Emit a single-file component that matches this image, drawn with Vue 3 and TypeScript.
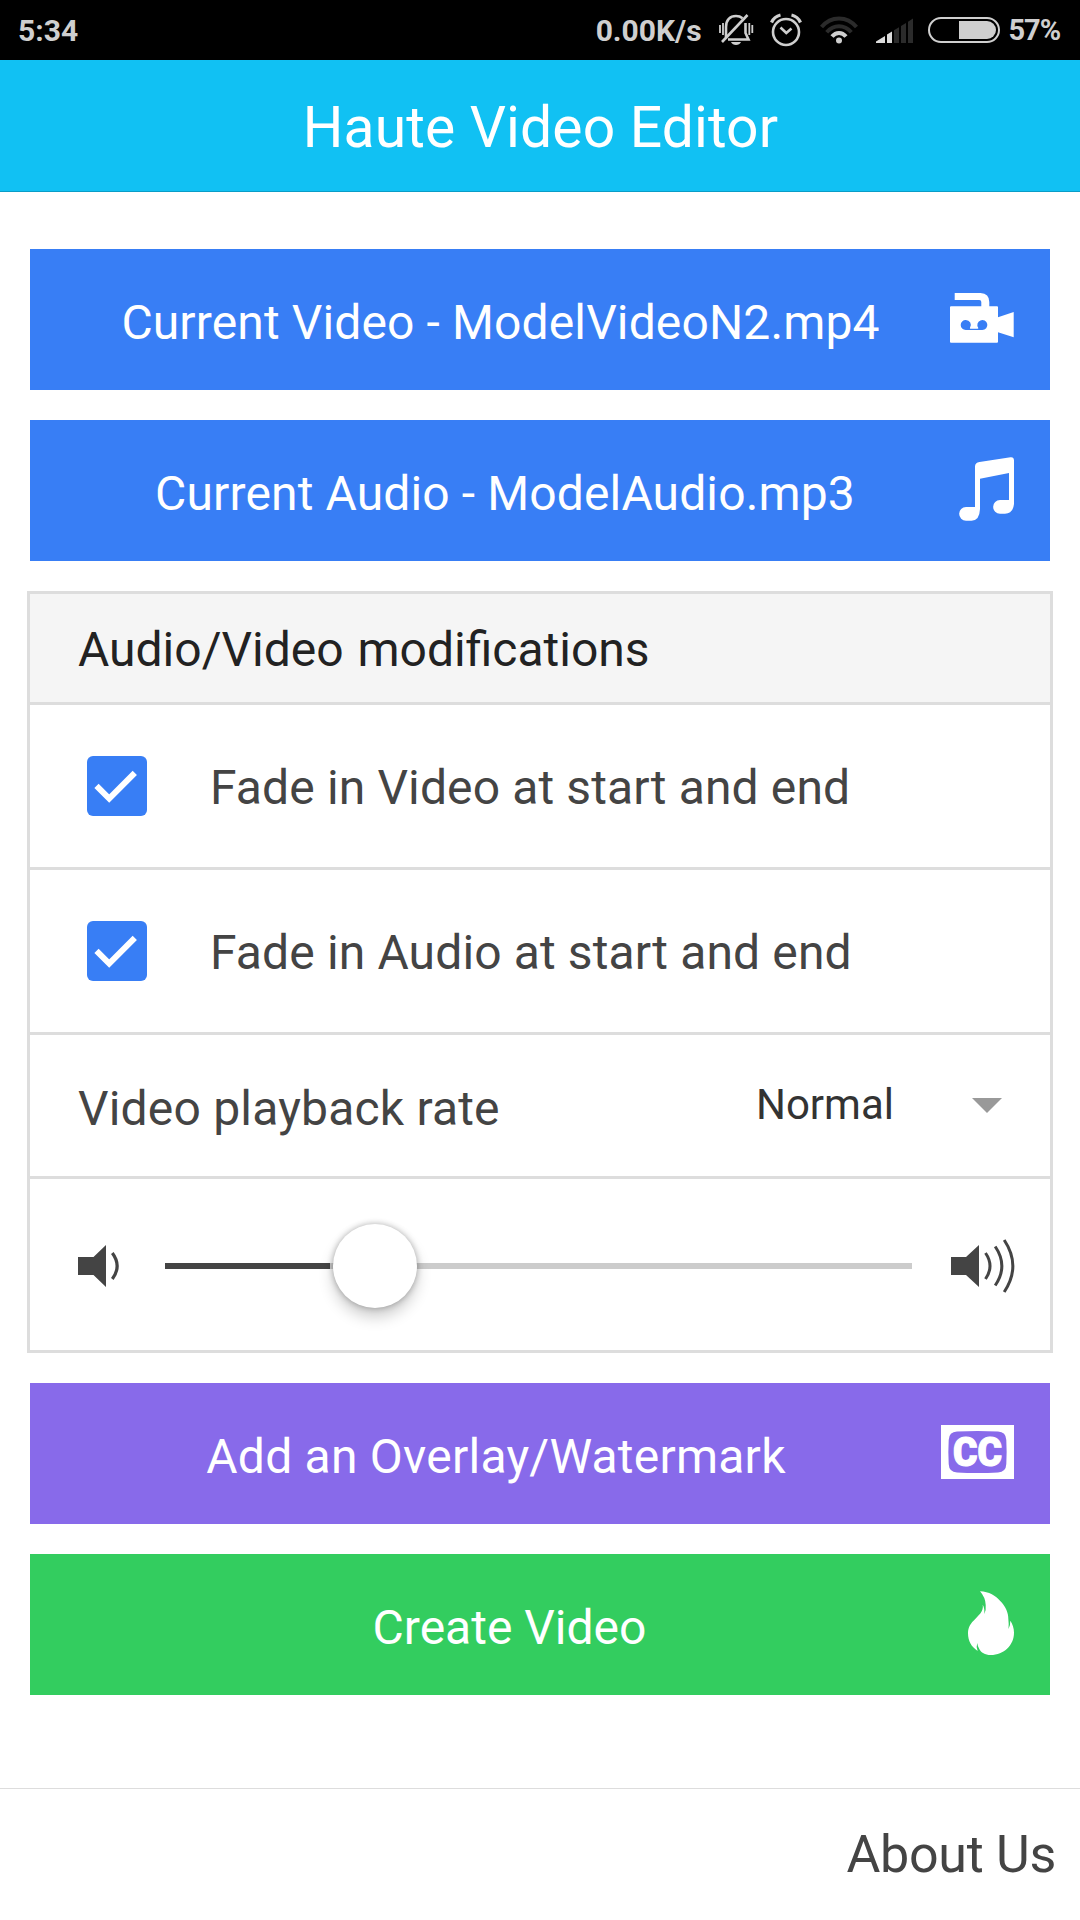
<script setup lang="ts">
import { ref } from 'vue'

interface Toggle {
  id: string
  label: string
  checked: boolean
}

const toggles = ref<Toggle[]>([
  { id: 'fade-video', label: 'Fade in Video at start and end', checked: true },
  { id: 'fade-audio', label: 'Fade in Audio at start and end', checked: true },
])
const videoFile = ref('ModelVideoN2.mp4')
const audioFile = ref('ModelAudio.mp3')
const rate = ref('Normal')
</script>

<template>
  <div class="screen">
    <div class="status">
      <span class="clock">5:34</span>
      <span class="speed">0.00K/s</span>
      <svg class="bell" width="36" height="34" viewBox="0 0 36 34" fill="none" stroke="#cfcfcf" stroke-width="2.6">
        <path d="M8 24V14C8 7 12 3 18 3c2.600 0 4.800.800 6.500 2.200M27.500 10v10l3 6.500H10" />
        <path d="M29.500 2 4 29" />
        <path d="M2 12v8M5 10v12M31.300 10v12M34.300 12v8" stroke-width="1.800" />
        <path d="M13 29h10c-1.500 4-8.500 4-10 0z" fill="#cfcfcf" stroke="none" />
      </svg>
      <svg class="alarm" width="32" height="34" viewBox="0 0 32 34" fill="none" stroke="#cfcfcf" stroke-width="2.600">
        <circle cx="16" cy="19" r="13" />
        <path d="M10.500 14.500l5.800 5.500 5.200-4.500" />
        <path d="M1.500 9.500C3 6 6 3 10.500 2M30.500 9.500C29 6 26 3 21.500 2" stroke-width="3.200" />
      </svg>
      <svg class="wifi" width="38" height="28" viewBox="0 0 38 28" fill="none" stroke="#2b2b2b" stroke-width="4">
        <path d="M1.500 11C11-.500 27-.500 36.500 11" />
        <path d="M6.700 16.200c7-8 17.600-8 24.600 0" />
        <path d="M12 20.500c4-4.800 10-4.800 14 0" stroke="#cfcfcf" />
        <circle cx="19" cy="24.500" r="3" fill="#cfcfcf" stroke="none" />
      </svg>
      <svg class="signal" width="37" height="25" viewBox="0 0 37 25">
        <path d="M0 25v-1.500L9 18v7zM11 25v-8.500l5-3V25z" fill="#dcdcdc" />
        <path d="M18 25V12.200l5-3V25zM25 25V8l5-3v20zM32 25V3.800L37 .500V25z" fill="#2b2b2b" />
      </svg>
      <svg class="battery" width="72" height="26" viewBox="0 0 72 26">
        <rect x="1" y="1" width="70" height="24" rx="12" fill="none" stroke="#cfcfcf" stroke-width="2" />
        <path d="M31 4h28a9 9 0 0 1 0 18H31z" fill="#cfcfcf" />
      </svg>
      <span class="percent">57%</span>
    </div>

    <header class="bar"><h1>Haute Video Editor</h1></header>

    <main class="content">
      <button class="btn positive">
        <span>Current Video - {{ videoFile }}</span>
        <svg class="i-video" width="64" height="50" viewBox="0 0 64 50" fill="#fff">
          <path d="M4.700 0H30.500Q39.300.500 39.300 9v5h-8V9q0-2-2-2H4.700z" />
          <path fill-rule="evenodd" d="M1 13.300H47q1 0 1 1V24.300L63.700 19V44.300L48 39.300v9.400q0 1-1 1H1q-1 0-1-1V14.300q0-1 1-1zM15.700 27a5 5 0 0 0 0 10h16.600a5 5 0 1 0-4.100-2.200q.500 1-.700 1h-7q-1 0-.500-1A5 5 0 0 0 15.700 27z" />
        </svg>
      </button>
      <button class="btn positive">
        <span>Current Audio - {{ audioFile }}</span>
        <svg class="i-music" width="55" height="64" viewBox="0 0 55 64" fill="#fff">
          <path d="M16 9.500Q16 5.800 20.500 5L51.500.200Q55-.200 55 3.500V47Q54 56.700 46 56.700H41A6.850 6.850 0 0 1 41 43H50V16L21 21.700V52Q20.500 63.700 12.500 63.700H7A6.850 6.850 0 0 1 7 50H16z" />
        </svg>
      </button>

      <section class="card">
        <div class="row divider">Audio/Video modifications</div>
        <label v-for="t in toggles" :key="t.id" class="row toggle">
          <span class="box">
            <svg v-if="t.checked" width="60" height="60" viewBox="0 0 60 60">
              <path d="M9.500 29.800 22.200 42.500 47.800 16.800" fill="none" stroke="#fff" stroke-width="6" />
            </svg>
          </span>
          <span class="caption">{{ t.label }}</span>
        </label>
        <div class="row select">
          <span class="caption">Video playback rate</span>
          <span class="value">{{ rate }}</span>
          <i class="arrow"></i>
        </div>
        <div class="row range">
          <svg width="42" height="54" viewBox="0 0 42 54">
            <path d="M0 18H15.500L28 6V48L15.500 36H0z" fill="#444" />
            <path d="M34.300 14Q44 27 34.300 40" fill="none" stroke="#444" stroke-width="3.200" />
          </svg>
          <div class="track"><div class="fill"></div><div class="thumb"></div></div>
          <svg width="64" height="54" viewBox="0 0 64 54">
            <path d="M0 18H15L28 6V48L15 36H0z" fill="#444" />
            <path d="M34.500 14Q43.500 27 34.500 40M44.200 7.500Q57.500 27 44.200 46.500M53.200 1Q70.500 27 53.200 53" fill="none" stroke="#444" stroke-width="3" />
          </svg>
        </div>
      </section>

      <button class="btn royal">
        <span>Add an Overlay/Watermark</span>
        <svg class="i-cc" width="73" height="54" viewBox="0 0 73 54">
          <path fill="#fff" d="M0 0h73v54H0z" />
          <path fill="#886aea" d="M16 6.600Q36.500 5.500 57 6.600 65 7 65.300 15 66 27 65.300 39 65 47 57 47.400 36.500 48.500 16 47.400 8 47 7.700 39 7 27 7.700 15 8 7 16 6.600z" />
          <text x="12" y="41" textLength="49" lengthAdjust="spacingAndGlyphs">CC</text>
        </svg>
      </button>
      <button class="btn balanced">
        <span>Create Video</span>
        <svg class="i-flame" width="46" height="64" viewBox="0 0 46 64" fill="#fff">
          <path d="M12 .300C21 .500 28 5 32 9.700 37.500 15 40.500 22 40.300 27.500Q41 33 40.500 38 42.500 34 42.300 29.700C44.500 33 46 37 46 41.700 46 54 36 64 22.700 64 17 64 13 61.500 11.300 58Q9.500 55 9.300 52 7.800 56 9.700 60C3.500 56 0 50 0 42.300 0 36 3 32 7 28.300L12.500 22.300Q15.500 18 14.700 13.700 16.800 17 16.300 23 18.300 19 17.700 14 17.500 6.500 12 .300z" />
        </svg>
      </button>
    </main>

    <footer class="footer">About Us</footer>
  </div>
</template>

<style>
body {
  margin: 0;
  background: #fff;
}
</style>

<style scoped>
.screen {
  width: 1080px;
  height: 1920px;
  display: flex;
  flex-direction: column;
  overflow: hidden;
  background: #fff;
  color: #444;
  font-family: Roboto, "Liberation Sans", sans-serif;
  font-size: 48px;
}
.screen * {
  box-sizing: border-box;
}
svg {
  display: block;
  flex: none;
}
.status {
  height: 60px;
  flex: none;
  display: flex;
  align-items: center;
  padding: 0 20px 0 18px;
  background: #000;
  color: #cfcfcf;
  font-size: 30px;
  font-weight: 700;
  line-height: 58px;
}
.clock,
.speed {
  padding-top: 2px;
}
.speed {
  margin-left: auto;
}
.bell {
  margin-left: 16px;
}
.alarm {
  margin-left: 16px;
}
.wifi {
  margin-left: 18px;
}
.signal {
  margin-left: 18px;
}
.battery {
  margin-left: 15px;
}
.percent {
  margin-left: 9px;
  font-size: 29px;
  letter-spacing: -1.1px;
}
.bar {
  height: 132px;
  flex: none;
  background: #11c1f3;
  border-bottom: 1px solid #0a9dc7;
}
h1 {
  margin: 0;
  padding: 4px 0 0 1px;
  text-align: center;
  color: #fff;
  font-size: 57px;
  font-weight: 400;
  letter-spacing: 0.13px;
  line-height: 127px;
}
.content {
  flex: 1;
  display: flex;
  flex-direction: column;
  gap: 30px;
  padding: 57px 30px 0;
}
.btn {
  height: 141px;
  flex: none;
  display: flex;
  align-items: center;
  gap: 15px;
  padding: 0 36px;
  border: 0;
  color: #fff;
  font: inherit;
}
.btn span {
  flex: 1;
  padding-top: 6px;
  text-align: center;
  white-space: nowrap;
}
.positive {
  background: #387ef5;
  letter-spacing: 0.13px;
}
.royal {
  background: #886aea;
  letter-spacing: 0.24px;
}
.balanced {
  background: #33cd5f;
}
.i-cc text {
  fill: #fff;
  stroke: #fff;
  stroke-width: 1.2px;
  font-size: 41px;
  font-weight: 900;
  letter-spacing: 0;
}
.i-video,
.i-music,
.i-cc,
.i-flame {
  margin-bottom: 3px;
}
.card {
  flex: none;
  margin: 0 -3px;
  border: 3px solid #ddd;
  background: #fff;
}
.row {
  display: flex;
  align-items: center;
  border-bottom: 3px solid #ddd;
}
.row:last-child {
  border-bottom: 0;
}
.divider {
  height: 111px;
  padding: 3px 0 0 48px;
  background: #f5f5f5;
  color: #222;
  word-spacing: 2px;
}
.toggle {
  height: 165px;
  padding-left: 57px;
}
.box {
  width: 60px;
  height: 60px;
  border-radius: 6px;
  background: #387ef5;
}
.toggle .caption {
  margin-left: 63px;
  padding-top: 3px;
  letter-spacing: 0.13px;
}
.select {
  height: 144px;
  padding: 0 48px;
}
.select .caption {
  padding-top: 6px;
  letter-spacing: 0.19px;
}
.value {
  margin-left: auto;
  padding-bottom: 2px;
  color: #333;
  font-size: 42px;
}
.arrow {
  margin-left: 78px;
  border: solid transparent;
  border-width: 15px 15px 0;
  border-top-color: #999;
}
.range {
  height: 171px;
  padding: 3px 35px 0 48px;
}
.track {
  position: relative;
  flex: none;
  width: 747px;
  height: 6px;
  margin: 0 39px 0 45px;
  background: #ccc;
}
.fill {
  width: 165px;
  height: 6px;
  background: #444;
}
.thumb {
  position: absolute;
  left: 168px;
  top: -39px;
  width: 84px;
  height: 84px;
  border-radius: 50%;
  background: #fff;
  box-shadow: 0 0 6px rgba(0, 0, 0, 0.3), 0 9px 15px rgba(0, 0, 0, 0.2);
}
.footer {
  height: 132px;
  flex: none;
  border-top: 1px solid #ddd;
  padding-right: 24px;
  text-align: right;
  font-size: 52px;
  letter-spacing: -0.3px;
  line-height: 131px;
}
</style>
